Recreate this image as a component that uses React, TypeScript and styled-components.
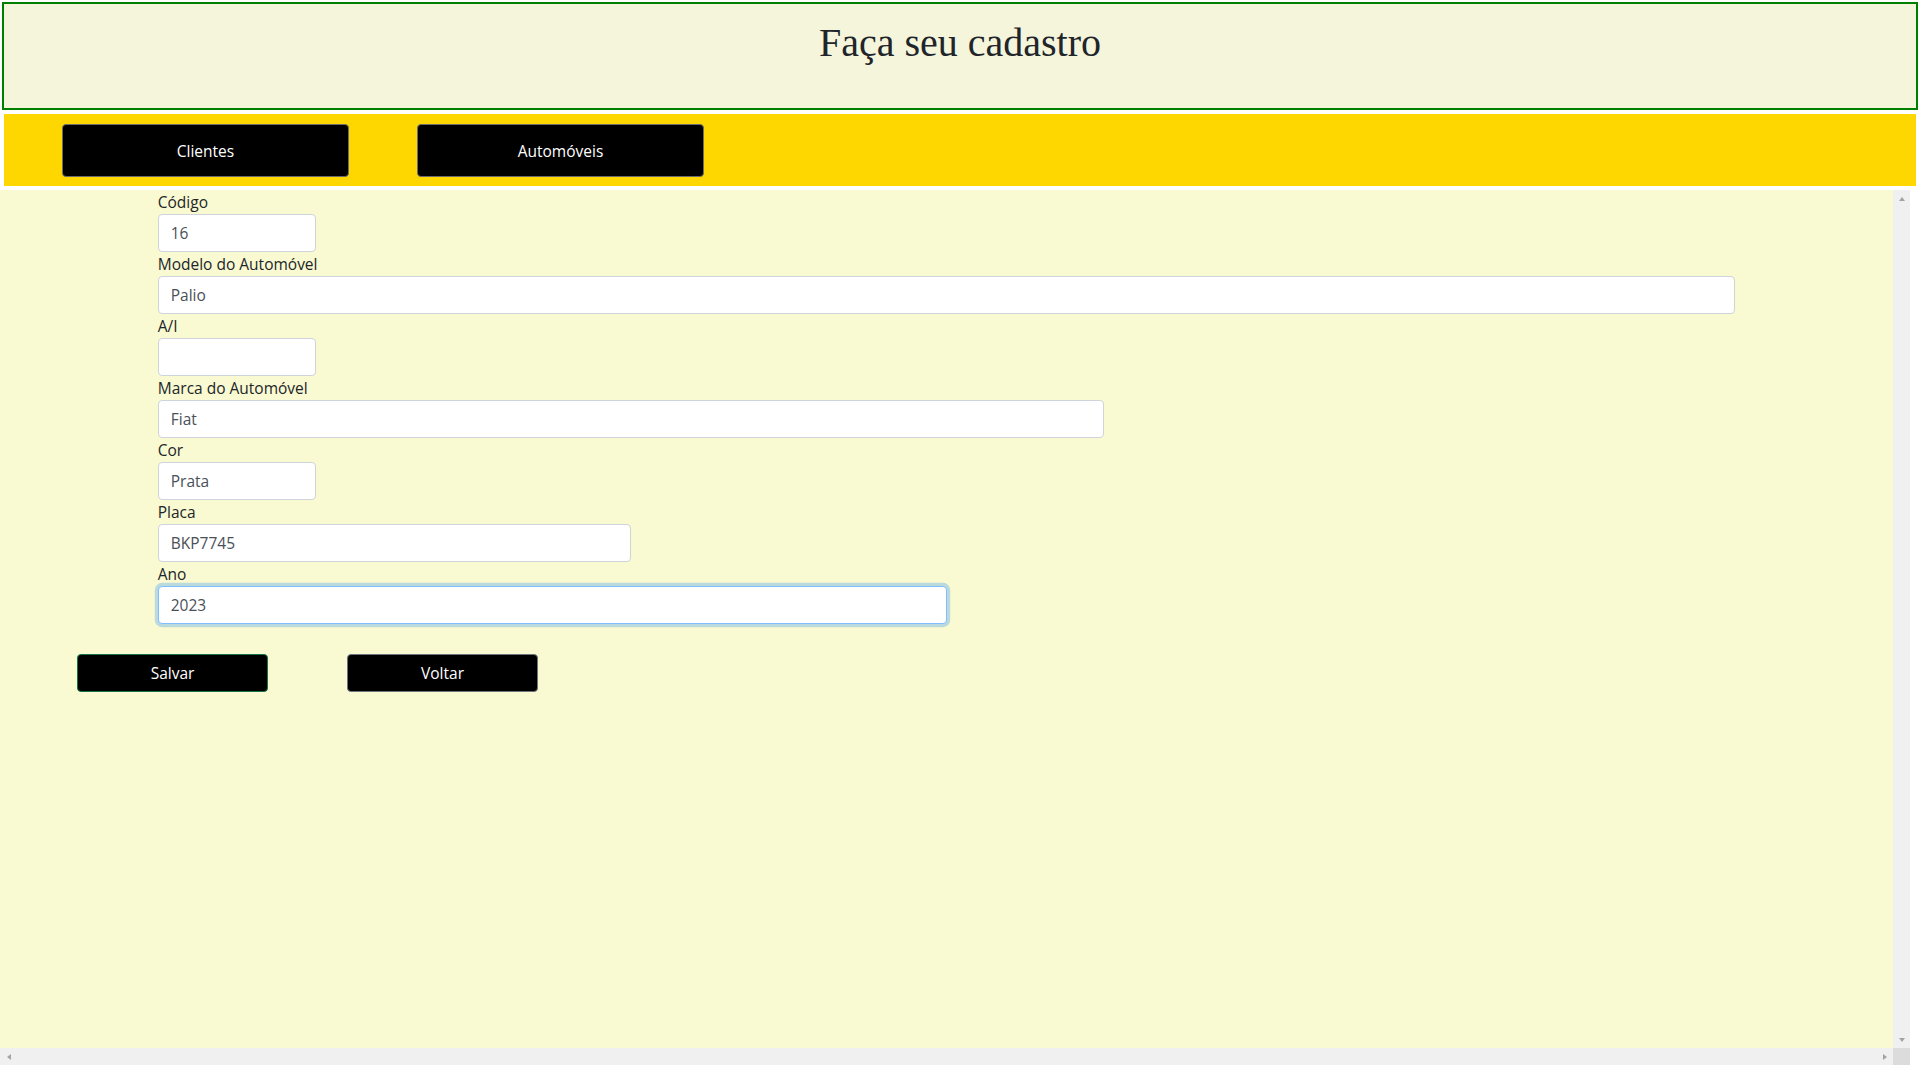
import React, { useEffect, useRef } from "react";
import styled, { createGlobalStyle, css } from "styled-components";

const GlobalStyle = createGlobalStyle`
  html, body {
    margin: 0;
    padding: 0;
    background: #ffffff;
  }
  body {
    font-family: "Open Sans", "Noto Sans", "Liberation Sans", sans-serif;
    font-size: 15.5px;
    color: #212529;
  }
  * { box-sizing: border-box; }
`;

const Page = styled.div`
  display: flex;
  flex-direction: column;
  width: 1920px;
`;

const Header = styled.header`
  margin: 2px 2px 0 2px;
  height: 108px;
  border: 2px solid #008000;
  background: #f5f5dc;
  padding-top: 16px;
  text-align: center;
`;

const Title = styled.h1`
  margin: 0;
  font-family: "Liberation Serif", "Times New Roman", serif;
  font-weight: 400;
  font-size: 40px;
  line-height: 46px;
  color: #212529;
`;

const Nav = styled.nav`
  margin: 4px 4px 0 4px;
  height: 72px;
  background: #ffd700;
  display: flex;
  align-items: flex-start;
  gap: 68px;
  padding: 10px 0 0 58px;
`;

const NavButton = styled.button`
  width: 287px;
  height: 53px;
  background: #000000;
  color: #ffffff;
  border: 1px solid #6c6c6c;
  border-radius: 4px;
  font-family: inherit;
  font-size: 15.5px;
  cursor: pointer;
`;

const ScrollFrame = styled.main`
  margin-top: 4px;
  width: 1910px;
  height: 875px;
  display: grid;
  grid-template-columns: minmax(0, 1fr) 17px;
  grid-template-rows: minmax(0, 1fr) 17px;
`;

const Viewport = styled.div`
  background: #fafad2;
  overflow: hidden;
`;

const ScrollBar = styled.div<{ $vertical?: boolean }>`
  background: #f0f0f0;
  display: flex;
  flex-direction: ${(p) => (p.$vertical ? "column" : "row")};
  justify-content: space-between;
`;

const Corner = styled.div`
  background: #dcdcdc;
`;

type Dir = "up" | "down" | "left" | "right";

const triangle = (dir: Dir) => {
  const c = "#a3a3a3";
  switch (dir) {
    case "up":
      return css`border-left: 3.5px solid transparent; border-right: 3.5px solid transparent; border-bottom: 4px solid ${c};`;
    case "down":
      return css`border-left: 3.5px solid transparent; border-right: 3.5px solid transparent; border-top: 4px solid ${c};`;
    case "left":
      return css`border-top: 3.5px solid transparent; border-bottom: 3.5px solid transparent; border-right: 4px solid ${c};`;
    default:
      return css`border-top: 3.5px solid transparent; border-bottom: 3.5px solid transparent; border-left: 4px solid ${c};`;
  }
};

const ArrowButton = styled.div<{ $dir: Dir }>`
  width: 17px;
  height: 17px;
  display: flex;
  align-items: center;
  justify-content: center;
  &::before {
    content: "";
    width: 0;
    height: 0;
    ${(p) => triangle(p.$dir)}
  }
`;

const FormGrid = styled.form`
  display: grid;
  grid-template-columns: repeat(12, minmax(0, 1fr));
`;

const Label = styled.label`
  grid-column: 2 / -1;
  line-height: 24px;
  height: 24px;
  font-size: 15.5px;
  color: #212529;
`;

const Input = styled.input<{ $span: number; $focused?: boolean }>`
  grid-column: 2 / span ${(p) => p.$span};
  width: 100%;
  min-width: 0;
  height: 38px;
  padding: 0 12px;
  border: 1px solid #ced4da;
  border-radius: 4px;
  background: #ffffff;
  font-family: inherit;
  font-size: 15.5px;
  color: #495057;
  caret-color: #212529;
  outline: none;
  ${(p) =>
    p.$focused &&
    css`
      border-color: #80bdff;
      box-shadow: 0 0 0 3.2px rgba(0, 123, 255, 0.25);
    `}
`;

const Actions = styled.div`
  display: flex;
  gap: 79px;
  padding-left: 77px;
  margin-top: 30px;
`;

const ActionButton = styled.button<{ $tone: "save" | "back" }>`
  width: 191px;
  height: 38px;
  background: #000000;
  color: #ffffff;
  border: 1px solid ${(p) => (p.$tone === "save" ? "#157347" : "#6c757d")};
  border-radius: 4px;
  font-family: inherit;
  font-size: 15.5px;
  cursor: pointer;
`;

type Field = { id: string; label: string; value: string; span: number; focused?: boolean };

const fields: Field[] = [
  { id: "codigo", label: "Código", value: "16", span: 1 },
  { id: "modelo", label: "Modelo do Automóvel", value: "Palio", span: 10 },
  { id: "ai", label: "A/I", value: "", span: 1 },
  { id: "marca", label: "Marca do Automóvel", value: "Fiat", span: 6 },
  { id: "cor", label: "Cor", value: "Prata", span: 1 },
  { id: "placa", label: "Placa", value: "BKP7745", span: 3 },
  { id: "ano", label: "Ano", value: "2023", span: 5, focused: true },
];

export default function App() {
  const focusRef = useRef<HTMLInputElement>(null);

  useEffect(() => {
    const el = focusRef.current;
    if (el) {
      el.focus();
      const end = el.value.length;
      el.setSelectionRange(end, end);
    }
  }, []);

  return (
    <>
      <GlobalStyle />
      <Page>
        <Header>
          <Title>Faça seu cadastro</Title>
        </Header>
        <Nav>
          <NavButton type="button">Clientes</NavButton>
          <NavButton type="button">Automóveis</NavButton>
        </Nav>
        <ScrollFrame>
          <Viewport>
            <FormGrid onSubmit={(e) => e.preventDefault()}>
              {fields.map((f) => (
                <React.Fragment key={f.id}>
                  <Label htmlFor={f.id}>{f.label}</Label>
                  <Input
                    id={f.id}
                    ref={f.focused ? focusRef : undefined}
                    defaultValue={f.value}
                    $span={f.span}
                    $focused={f.focused}
                  />
                </React.Fragment>
              ))}
            </FormGrid>
            <Actions>
              <ActionButton type="button" $tone="save">Salvar</ActionButton>
              <ActionButton type="button" $tone="back">Voltar</ActionButton>
            </Actions>
          </Viewport>
          <ScrollBar $vertical>
            <ArrowButton $dir="up" />
            <ArrowButton $dir="down" />
          </ScrollBar>
          <ScrollBar>
            <ArrowButton $dir="left" />
            <ArrowButton $dir="right" />
          </ScrollBar>
          <Corner />
        </ScrollFrame>
      </Page>
    </>
  );
}
